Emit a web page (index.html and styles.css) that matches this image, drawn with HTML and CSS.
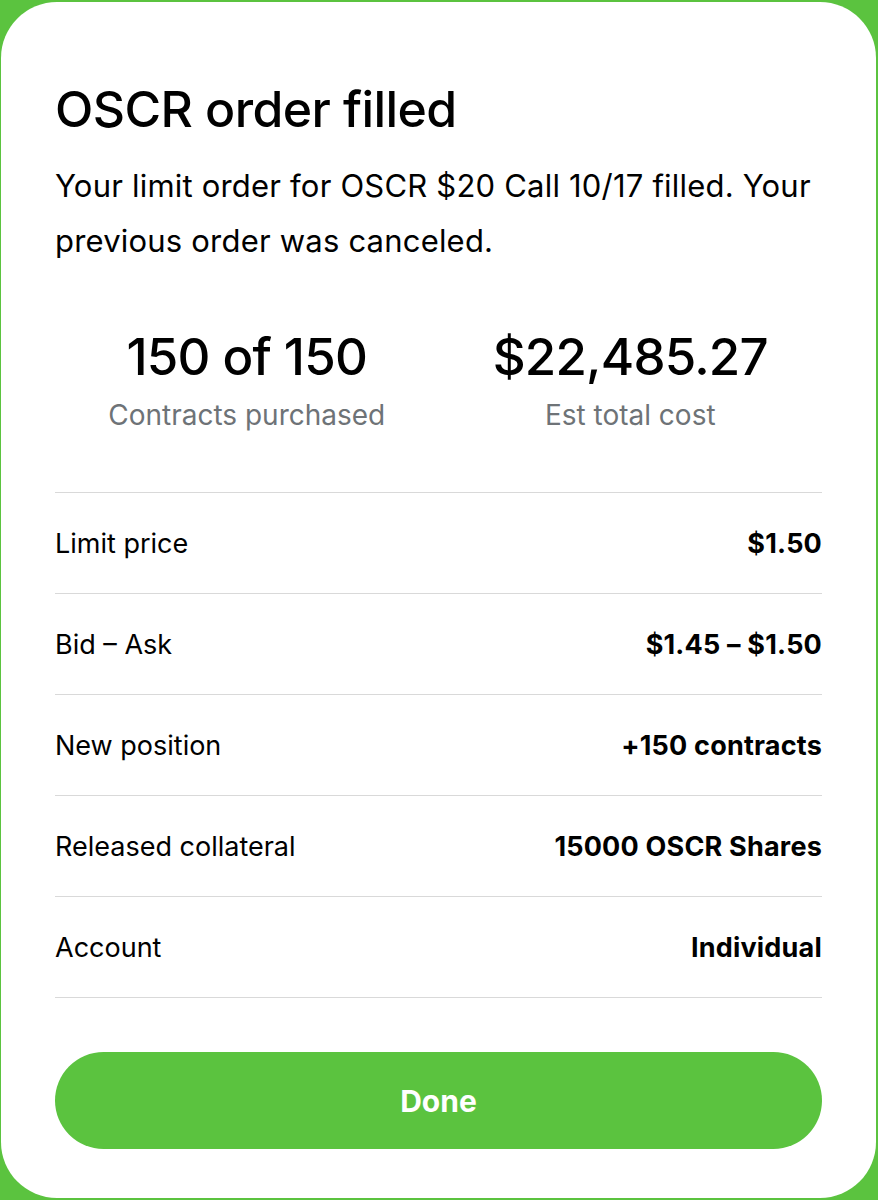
FILE: index.html
```html
<!DOCTYPE html>
<html lang="en">
<head>
    <meta charset="UTF-8">
    <title>OSCR order filled</title>
    <link rel="stylesheet" href="styles.css">
</head>
<body>
    <div class="sheet">
        <h1 class="title">OSCR order filled</h1>
        <p class="msg">Your limit order for OSCR $20 Call 10/17 filled. Your previous order was canceled.</p>

        <div class="stats">
            <div class="stat">
                <div class="num">150 of 150</div>
                <div class="cap">Contracts purchased</div>
            </div>
            <div class="stat">
                <div class="num">$22,485.27</div>
                <div class="cap">Est total cost</div>
            </div>
        </div>

        <ul class="rows">
            <li><span>Limit price</span><b>$1.50</b></li>
            <li><span>Bid – Ask</span><b>$1.45 – $1.50</b></li>
            <li><span>New position</span><b>+150 contracts</b></li>
            <li><span>Released collateral</span><b>15000 OSCR Shares</b></li>
            <li><span>Account</span><b>Individual</b></li>
        </ul>

        <button class="done">Done</button>
    </div>
</body>
</html>
```

FILE: styles.css
```css
html,body{
    margin:0;
    padding:0;
}
body{
    background:#5bc33f;
    font-family:Inter, "Noto Sans", sans-serif;
    color:#000;
    height:1200px;
    overflow:hidden;
}
.sheet{
    box-sizing:border-box;
    height:1196px;
    margin:2px 2px 0 1px;
    background:#fff;
    border-radius:56px;
    padding:76px 54px 0 54px;
}
.title{
    margin:0;
    font-size:50px;
    font-weight:500;
    line-height:62px;
    letter-spacing:-0.6px;
}
.msg{
    margin:18px 0 0 0;
    font-size:31px;
    line-height:55px;
    letter-spacing:0.2px;
}
.stats{
    display:flex;
    margin-top:58px;
}
.stat{
    flex:1;
    text-align:center;
}
.num{
    font-size:51px;
    font-weight:500;
    line-height:62px;
    letter-spacing:-0.8px;
}
.cap{
    font-size:28px;
    line-height:40px;
    color:#6e7377;
    margin-top:7px;
}
.rows{
    list-style:none;
    margin:57px 0 0 0;
    padding:0;
    border-top:1px solid #d9d9d9;
}
.rows li{
    display:flex;
    justify-content:space-between;
    align-items:center;
    height:100px;
    border-bottom:1px solid #d9d9d9;
    font-size:27px;
}
.rows b{
    font-weight:700;
    letter-spacing:0.2px;
}
.done{
    display:block;
    width:100%;
    height:97px;
    margin-top:54px;
    border:none;
    border-radius:49px;
    background:#5bc33f;
    color:#fff;
    font-family:inherit;
    font-size:30px;
    font-weight:700;
}
```
